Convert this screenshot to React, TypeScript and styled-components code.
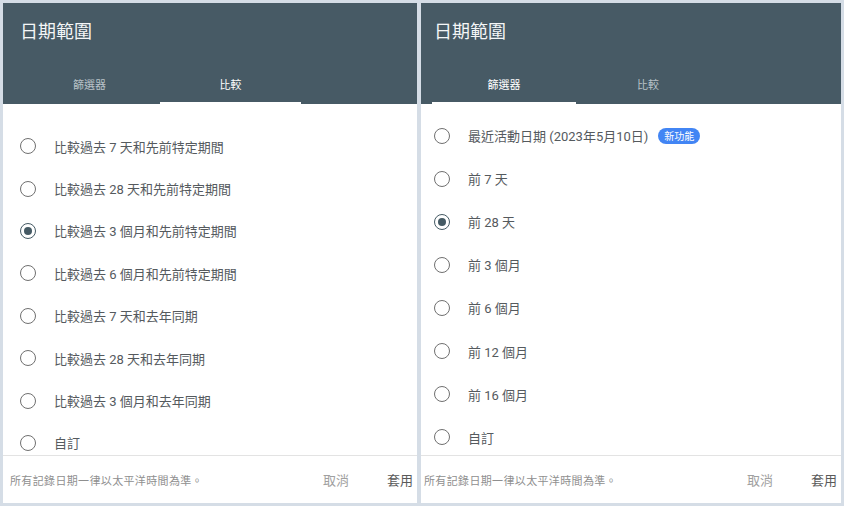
import { createGlobalStyle } from 'styled-components';
import styled from 'styled-components';

const GlobalStyle = createGlobalStyle`
	html, body {
		margin: 0;
		padding: 0;
		background: #d5dde6;
	}
	body {
		font-family: Roboto, 'Noto Sans CJK TC', 'Noto Sans', sans-serif;
	}
`;

type PanelLayout = {
	width: number;
	inset: number;
	tabsLeft: number;
	tabWidth: number;
	rowHeight: number;
	listTop: number;
	radioLeft: number;
	labelGap: number;
	noteLeft: number;
};

type Option = { label: string; badge?: string };

const compareOptions: Option[] = [
	{ label: '比較過去 7 天和先前特定期間' },
	{ label: '比較過去 28 天和先前特定期間' },
	{ label: '比較過去 3 個月和先前特定期間' },
	{ label: '比較過去 6 個月和先前特定期間' },
	{ label: '比較過去 7 天和去年同期' },
	{ label: '比較過去 28 天和去年同期' },
	{ label: '比較過去 3 個月和去年同期' },
	{ label: '自訂' },
];

const filterOptions: Option[] = [
	{ label: '最近活動日期 (2023年5月10日)', badge: '新功能' },
	{ label: '前 7 天' },
	{ label: '前 28 天' },
	{ label: '前 3 個月' },
	{ label: '前 6 個月' },
	{ label: '前 12 個月' },
	{ label: '前 16 個月' },
	{ label: '自訂' },
];

const Page = styled.div`
	display: flex;
	gap: 4px;
	padding: 3px;
	height: 500px;
`;

const PanelBox = styled.section<{ $w: number }>`
	width: ${(p) => p.$w}px;
	height: 100%;
	background: #fff;
	display: flex;
	flex-direction: column;
	overflow: hidden;
`;

const Header = styled.header`
	height: 101px;
	background: #475a65;
	display: flex;
	flex-direction: column;
	flex-shrink: 0;
`;

const Title = styled.h1<{ $inset: number }>`
	margin: 0;
	padding: 17px 0 0 ${(p) => p.$inset}px;
	height: 24px;
	line-height: 24px;
	font-size: 18px;
	font-weight: 400;
	color: #f4f6f7;
`;

const Tabs = styled.div<{ $left: number }>`
	margin-top: auto;
	display: flex;
	padding-left: ${(p) => p.$left}px;
	height: 40px;
`;

const Tab = styled.div<{ $w: number; $active: boolean }>`
	width: ${(p) => p.$w}px;
	display: flex;
	align-items: center;
	justify-content: center;
	font-size: 11px;
	color: ${(p) => (p.$active ? '#ffffff' : '#b9c2c8')};
	border-bottom: 2px solid ${(p) => (p.$active ? '#ffffff' : 'transparent')};
	box-sizing: border-box;
	padding-top: 2px;
`;

const List = styled.div<{ $top: number }>`
	flex: 1;
	overflow: hidden;
	padding-top: ${(p) => p.$top}px;
`;

const Row = styled.label<{ $h: number; $left: number; $gap: number }>`
	height: ${(p) => p.$h}px;
	display: flex;
	align-items: center;
	padding-left: ${(p) => p.$left}px;
	gap: ${(p) => p.$gap}px;
	font-size: 13px;
	color: #555a5e;
`;

const Label = styled.span`
	display: flex;
	align-items: center;
`;

const Radio = styled.span<{ $checked: boolean }>`
	width: 16px;
	height: 16px;
	box-sizing: border-box;
	border-radius: 50%;
	border: 1.7px solid ${(p) => (p.$checked ? '#455a64' : '#707070')};
	display: flex;
	align-items: center;
	justify-content: center;
	flex-shrink: 0;

	&::after {
		content: '';
		width: 8px;
		height: 8px;
		border-radius: 50%;
		background: ${(p) => (p.$checked ? '#455a64' : 'transparent')};
	}
`;

const Badge = styled.span`
	margin-left: 10px;
	height: 16px;
	padding: 0 6px;
	border-radius: 8px;
	background: #4285f4;
	color: #fff;
	font-size: 10px;
	display: inline-flex;
	align-items: center;
`;

const Footer = styled.footer<{ $left: number }>`
	height: 47px;
	flex-shrink: 0;
	border-top: 1px solid #e3e3e3;
	display: flex;
	align-items: center;
	padding: 0 4px 0 ${(p) => p.$left}px;
`;

const Note = styled.span`
	flex: 1;
	font-size: 11px;
	letter-spacing: 0.35px;
	color: #8f8f8f;
`;

const Action = styled.button<{ $primary?: boolean }>`
	background: none;
	border: none;
	padding: 0;
	margin-left: ${(p) => (p.$primary ? '38px' : '0')};
	font-family: inherit;
	font-size: 13px;
	color: ${(p) => (p.$primary ? '#5a5a5a' : '#a0a0a0')};
`;

type PanelProps = {
	layout: PanelLayout;
	activeTab: number;
	options: Option[];
	selected: number;
};

const Panel: React.FunctionComponent<PanelProps> = ({ layout, activeTab, options, selected }) => (
	<PanelBox $w={layout.width}>
		<Header>
			<Title $inset={layout.inset}>日期範圍</Title>
			<Tabs $left={layout.tabsLeft}>
				{['篩選器', '比較'].map((t, i) => (
					<Tab key={t} $w={layout.tabWidth} $active={i === activeTab}>
						{t}
					</Tab>
				))}
			</Tabs>
		</Header>
		<List $top={layout.listTop}>
			{options.map((o, i) => (
				<Row key={o.label} $h={layout.rowHeight} $left={layout.radioLeft} $gap={layout.labelGap}>
					<Radio $checked={i === selected} />
					<Label>
						{o.label}
						{o.badge && <Badge>{o.badge}</Badge>}
					</Label>
				</Row>
			))}
		</List>
		<Footer $left={layout.noteLeft}>
			<Note>所有記錄日期一律以太平洋時間為準。</Note>
			<Action>取消</Action>
			<Action $primary>套用</Action>
		</Footer>
	</PanelBox>
);

const leftLayout: PanelLayout = {
	width: 414,
	inset: 17,
	tabsLeft: 16,
	tabWidth: 141,
	rowHeight: 42.4,
	listTop: 21,
	radioLeft: 17,
	labelGap: 18,
	noteLeft: 7,
};

const rightLayout: PanelLayout = {
	width: 420,
	inset: 13,
	tabsLeft: 11,
	tabWidth: 144,
	rowHeight: 43.1,
	listTop: 10,
	radioLeft: 13,
	labelGap: 18,
	noteLeft: 3,
};

const App: React.FunctionComponent = () => (
	<>
		<GlobalStyle />
		<Page>
			<Panel layout={leftLayout} activeTab={1} options={compareOptions} selected={2} />
			<Panel layout={rightLayout} activeTab={0} options={filterOptions} selected={2} />
		</Page>
	</>
);

export default App;
